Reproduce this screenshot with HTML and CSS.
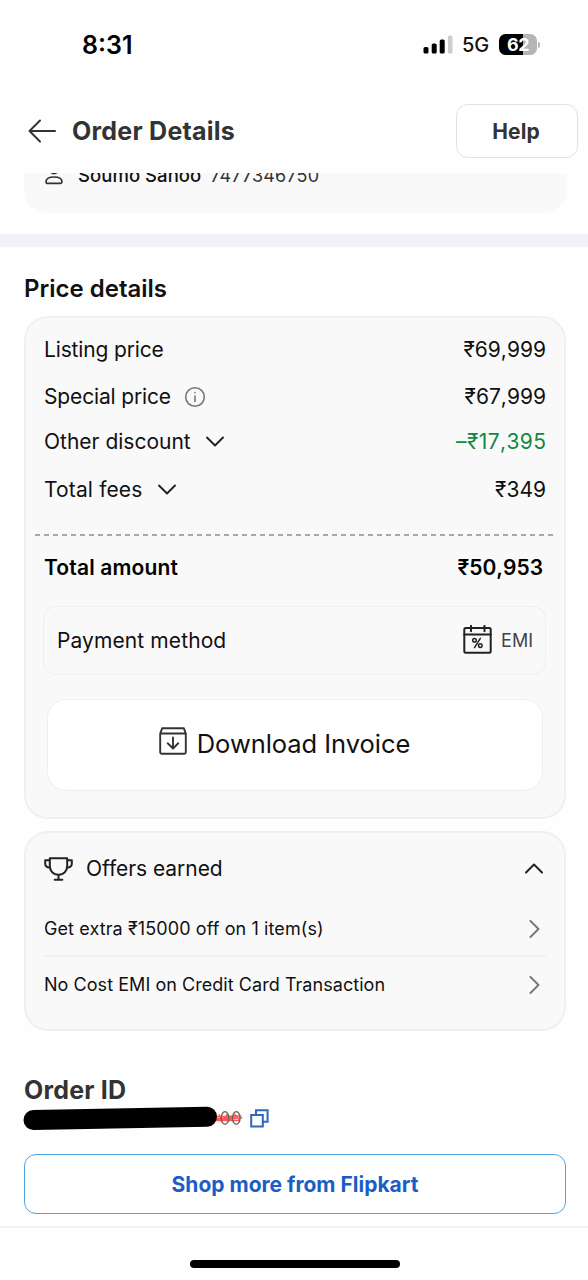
FILE: index.html
```html
<!DOCTYPE html>
<html lang="en">
<head>
<meta charset="utf-8">
<title>Order Details</title>
<link rel="stylesheet" href="styles.css">
</head>
<body>
<div class="status">
  <span class="time">8:31</span>
  <div class="indicators">
    <svg class="signal" width="30" height="20" viewBox="0 0 30 20"><rect x="0.5" y="12" width="5" height="6.5" rx="1.6"/><rect x="8.7" y="8.5" width="5" height="10" rx="1.6"/><rect x="16.7" y="4.500" width="5" height="14" rx="1.6"/><rect x="25" y="0.500" width="4.500" height="18" rx="1.6" fill="#cdcdcd"/></svg>
    <span class="network">5G</span>
    <span class="battery"><span class="level">62</span></span><span class="battery-tip"></span>
  </div>
</div>
<header class="appbar">
  <svg class="back" width="28" height="24" viewBox="0 0 28 24"><path d="M27 12H1.500M12 1.500 1.500 12 12 22.500"/></svg>
  <h1 class="title">Order Details</h1>
  <button class="help">Help</button>
</header>
<main class="content">
  <div class="contact">
    <svg class="person" width="18" height="26" viewBox="0 0 18 26"><circle cx="9" cy="10.300" r="4.300"/><path d="M1 22.800c0-3.300 3.800-4.800 8-4.800s8 1.500 8 4.800c0 1.100-.6 1.600-1.600 1.600H2.600C1.600 24.400 1 23.900 1 22.800Z"/></svg>
    <span class="name">Soumo Sahoo</span><span class="phone">7477346750</span>
  </div>
  <div class="band"></div>
  <h2 class="section-title">Price details</h2>
  <section class="card prices">
    <div class="row listing"><span class="label">Listing price</span><span class="amount">₹69,999</span></div>
    <div class="row special"><span class="label">Special price</span><svg class="info" width="22" height="22" viewBox="0 0 22 22"><circle cx="11" cy="11" r="9.300"/><path d="M11 10v5.500M11 6.500v.3"/></svg><span class="amount">₹67,999</span></div>
    <div class="row other"><span class="label wide">Other discount</span><svg class="down" width="18" height="11" viewBox="0 0 18 11"><path d="m1 1.500 8 8 8-8"/></svg><span class="amount saving">–₹17,395</span></div>
    <div class="row fees"><span class="label wide-fees">Total fees</span><svg class="down" width="18" height="11" viewBox="0 0 18 11"><path d="m1 1.500 8 8 8-8"/></svg><span class="amount fee">₹349</span></div>
    <div class="dashes"></div>
    <div class="row total"><span class="total-label">Total amount</span><span class="amount total-amount">₹50,953</span></div>
    <div class="payment">
      <span class="pay-label">Payment method</span>
      <svg class="calendar" width="29" height="29" viewBox="0 0 29 29"><rect x="1.300" y="3" width="26.400" height="24.700" rx="1.500"/><path d="M1.300 9.500h26.400M8 .700v5.500M21.500.700v5.500"/><g class="percent"><circle cx="11.500" cy="15.300" r="1.800"/><circle cx="17.300" cy="20.600" r="1.800"/><path d="m17.300 13.300-5.800 9.400"/></g></svg>
      <span class="emi">EMI</span>
    </div>
    <button class="invoice">
      <svg class="download" width="28" height="28" viewBox="0 0 28 28"><path d="M1.200 6.500 3.200 1.200h21.600L26.800 6.500M1.200 6.500v18.800c0 .9.500 1.400 1.400 1.400h22.800c.9 0 1.400-.5 1.400-1.400V6.500ZM14 10.500V21M8.700 16.300 14 21.500l5.300-5.200"/></svg>
      <span class="invoice-label">Download Invoice</span>
    </button>
  </section>
  <section class="card offers">
    <div class="offers-head">
      <svg class="trophy" width="29" height="24" viewBox="0 0 29 24"><path d="M5.800 1.200h17.400v7.500c0 5-3.300 9-8.700 9s-8.700-4-8.700-9ZM5.800 3.300H1.200v3.500c0 2.400 1.600 3.700 5 4M23.200 3.300h4.600v3.500c0 2.400-1.600 3.700-5 4M14.500 17.700v4.800M10.700 22.800h7.600"/></svg>
      <span class="offers-label">Offers earned</span>
      <svg class="up" width="18" height="11" viewBox="0 0 18 11"><path d="m1 9.500 8-8 8 8"/></svg>
    </div>
    <div class="offer first"><span class="offer-a">Get extra ₹15000 off on 1 item(s)</span><svg class="next" width="11" height="18" viewBox="0 0 11 18"><path d="m1.500 1 8 8-8 8"/></svg></div>
    <div class="offer"><span class="offer-b">No Cost EMI on Credit Card Transaction</span><svg class="next" width="11" height="18" viewBox="0 0 11 18"><path d="m1.500 1 8 8-8 8"/></svg></div>
  </section>
  <h2 class="order-title">Order ID</h2>
  <div class="order-id">
    <svg class="redaction" width="222" height="26" viewBox="0 0 222 26"><path class="scribble" d="M188 10.500 218 9.800 190 13 219 11.800 189 14.500 216 14.500M196 8.500l4 6 4-6 4 6 4-6 4 5"/><ellipse class="digit" cx="202" cy="12" rx="3.800" ry="6.300"/><ellipse class="digit" cx="213.300" cy="12" rx="3.800" ry="6.300"/><path class="marker" d="M10.500 14 184 10.800"/></svg>
    <svg class="copy" width="19" height="19" viewBox="0 0 19 19"><path d="M1.200 6h11.600v11.600H1.200ZM6 6V1.200h11.600v11.600h-4.800"/></svg>
  </div>
  <button class="shop"><span>Shop more from Flipkart</span></button>
</main>
<footer class="home"><span class="home-bar"></span></footer>
</body>
</html>
```
FILE: styles.css
```css
* { box-sizing: border-box; }
body { margin: 0; width: 588px; height: 1280px; overflow: hidden; background: #fefefe; color: #111; font-family: Inter, "Liberation Sans", sans-serif; display: flex; flex-direction: column; }
h1, h2 { margin: 0; }
button { font-family: inherit; margin: 0; padding: 0; }
span { white-space: nowrap; }
svg { display: block; flex: none; fill: none; stroke-linecap: round; stroke-linejoin: round; }

.status { height: 89px; flex: none; padding: 0 48px 0 82px; display: flex; align-items: center; justify-content: space-between; }
.time { font-size: 25px; font-weight: 600; color: #000; }
.indicators { display: flex; align-items: center; }
.signal { fill: #000; }
.network { margin-left: 9px; width: 28px; font-size: 20px; font-weight: 500; letter-spacing: -0.2px; }
.battery { margin-left: 9px; width: 38px; height: 21px; border-radius: 6.5px; background: linear-gradient(90deg, #000 62%, #b5b5b5 62%); display: flex; align-items: center; justify-content: center; }
.level { color: #fff; font-size: 18px; line-height: 21px; font-weight: 700; letter-spacing: -0.5px; }
.battery-tip { width: 2px; height: 6px; margin-left: 1px; border-radius: 0 2px 2px 0; background: #b5b5b5; }

.appbar { height: 84px; flex: none; padding: 0 10px 0 28px; display: flex; align-items: center; }
.back { stroke: #333; stroke-width: 2; }
.title { margin-left: 16px; font-size: 25px; font-weight: 650; letter-spacing: 0.25px; color: #333; }
.help { margin-left: auto; width: 122px; height: 54px; border: 1.5px solid #e1e1e1; border-radius: 12px; background: #fff; color: #333; font-size: 21px; font-weight: 650; letter-spacing: 0.1px; padding-right: 2px; }

.content { height: 1053px; flex: none; overflow: hidden; }
.contact { height: 60px; margin: -20px 21px 0 24px; padding-left: 21px; border-radius: 0 0 22px 22px; background: #f9f9f9; display: flex; align-items: flex-start; }
.person { stroke: #333; stroke-width: 1.700; margin-top: 6px; }
.name { margin-left: 15px; margin-top: 10px; font-size: 18.500px; line-height: 25px; letter-spacing: 0.05px; font-weight: 500; color: #111; }
.phone { margin-left: 9px; margin-top: 10px; font-size: 18px; line-height: 25px; letter-spacing: 0.15px; color: #333; }
.band { height: 13px; margin-top: 21px; background: #f1f2f9; }
.section-title { margin: 26px 0 12px 24px; height: 31px; line-height: 31px; font-size: 24px; font-weight: 600; }

.card { margin: 0 22px 0 24px; border: 2px solid #f0f0f0; border-radius: 24px; background: #f9f9f9; }
.prices { height: 503px; }
.row { padding: 0 18px; display: flex; align-items: center; font-size: 21px; }
.label { letter-spacing: -0.15px; }
.wide { letter-spacing: 0; }
.wide-fees { letter-spacing: 0.15px; }
.amount { margin-left: auto; font-kerning: none; }
.listing { height: 47px; margin-top: 8px; }
.special { height: 46px; }
.other { height: 45px; }
.fees { height: 50px; }
.info { margin-left: 13px; margin-top: 1px; stroke: #777; stroke-width: 1.600; }
.down { margin-left: 15px; stroke: #222; stroke-width: 1.900; }
.saving { color: #15883e; letter-spacing: 0.4px; margin-right: -0.4px; }
.dashes { height: 2px; margin: 20px 8px 0 9px; background: repeating-linear-gradient(90deg, #a8a8a8 0 5px, transparent 5px 9px); }
.total { height: 36px; margin-top: 13px; padding-right: 21px; font-weight: 600; color: #000; }
.total-label { letter-spacing: 0.15px; }
.payment { height: 69px; margin: 21px 18px 0 17px; padding: 0 12px; border: 1.5px solid #efefef; border-radius: 13px; display: flex; align-items: center; font-size: 21px; }
.pay-label { margin-left: 1px; letter-spacing: 0.1px; }
.calendar { margin-left: auto; margin-top: -2px; stroke: #222; stroke-width: 2; }
.percent { stroke-width: 1.500; }
.emi { margin-left: 9px; font-size: 18px; color: #444; }
.invoice { width: 496px; height: 92px; margin: 24px 0 0 21px; padding-right: 21px; border: 1.5px solid #efefef; border-radius: 19px; background: #fff; color: #111; display: flex; align-items: center; justify-content: center; }
.download { stroke: #333; stroke-width: 1.900; margin-top: -8px; }
.invoice-label { margin: -3px 0 0 10px; font-size: 25.500px; letter-spacing: -0.05px; }

.offers { height: 200px; margin-top: 12px; padding: 0 18px; }
.offers-head { height: 71px; display: flex; align-items: center; }
.trophy { stroke: #222; stroke-width: 2; }
.offers-label { margin: 0 0 0 13px; font-size: 21px; letter-spacing: -0.05px; }
.up { margin-left: auto; margin-right: 3px; stroke: #222; stroke-width: 2; }
.offer { height: 55px; display: flex; align-items: center; font-size: 18px; letter-spacing: 0.05px; }
.offer-a { letter-spacing: 0.1px; }
.first { height: 53px; padding-bottom: 2px; border-bottom: 2px solid #f1f1f1; }
.next { margin-left: auto; margin-right: 6px; stroke: #777; stroke-width: 1.900; }

.order-title { margin: 43px 0 0 24px; height: 32px; line-height: 32px; font-size: 25px; font-weight: 650; letter-spacing: 0.2px; color: #333; }
.order-id { height: 26px; margin-left: 23px; display: flex; align-items: center; }
.redaction { margin-top: -1px; }
.scribble { stroke: #ff5860; stroke-width: 1.300; }
.digit { stroke: #665; stroke-width: 1.300; }
.marker { stroke: #000; stroke-width: 20; }
.copy { margin-left: 5px; margin-top: -2px; stroke: #2d68bd; stroke-width: 2; stroke-linejoin: miter; }
.shop { width: 542px; height: 60px; margin: 22px 0 0 24px; border: 1.5px solid #4ca4e0; border-radius: 12px; background: #fff; color: #1a5ec4; font-size: 21px; font-weight: 650; display: flex; align-items: center; justify-content: center; }

.home { height: 54px; flex: none; border-top: 2px solid #f1f1f3; display: flex; justify-content: center; }
.home-bar { width: 210px; height: 8px; margin: 32px 0 0 2px; border-radius: 4px; background: #000; }
```
